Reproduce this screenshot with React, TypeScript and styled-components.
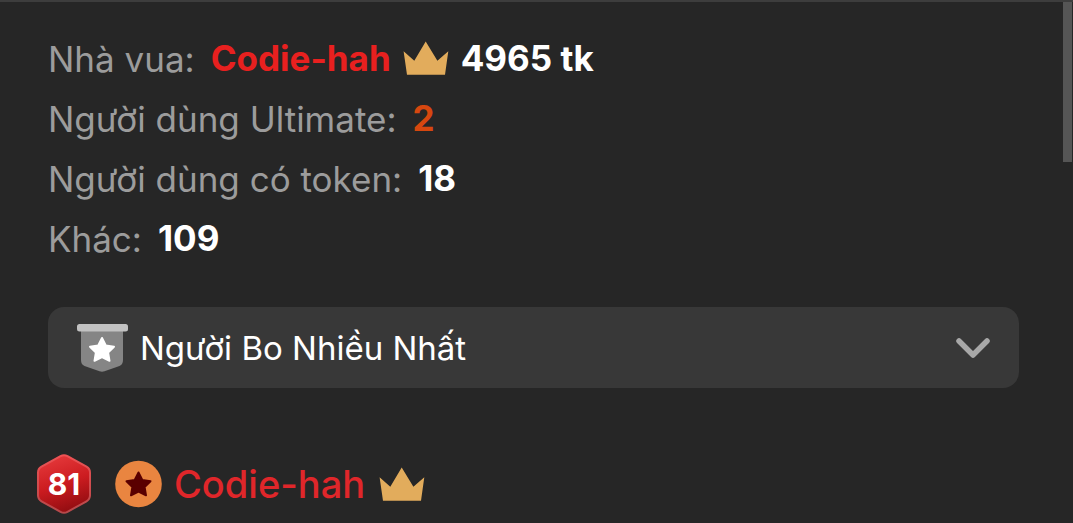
import React from 'react';
import styled, { createGlobalStyle } from 'styled-components';

const GlobalStyle = createGlobalStyle`
  * { box-sizing: border-box; }
  body {
    margin: 0;
    background: #262626;
    font-family: Inter, "Noto Sans", sans-serif;
    font-size: 35px;
    line-height: 60px;
    color: #fff;
    overflow: hidden;
  }
`;

const Page = styled.div`
  display: flex;
  align-items: flex-start;
  border-top: 2px solid #3d3d3d;
`;

const Content = styled.main`
  flex: 1;
  min-width: 0;
  padding: 27px 44px 0 48px;
`;

const ScrollThumb = styled.div`
  width: 9px;
  height: 160px;
  margin-right: 1px;
  background: #555;
`;

const Stats = styled.dl`
  margin: 0;
`;

const Stat = styled.div`
  display: flex;
  align-items: center;
  height: 60px;
`;

const Label = styled.dt`
  margin-right: 16px;
  color: #9c9c9c;
`;

const Value = styled.dd<{ $color?: string }>`
  display: flex;
  align-items: center;
  gap: 12px;
  margin: 0 0 2px;
  font-weight: 700;
  color: ${(p) => p.$color ?? '#fff'};
`;

const Amount = styled.span`
  color: #fff;
`;

const Picker = styled.div`
  display: flex;
  align-items: center;
  height: 81px;
  margin-top: 38px;
  padding: 0 28px;
  border-radius: 16px;
  background: #383838;
`;

const PickerSelect = styled.select`
  flex: 1;
  min-width: 0;
  height: 60px;
  margin: 0 12px;
  padding: 0;
  border: 0;
  outline: 0;
  appearance: none;
  background: transparent;
  color: #fff;
  font: inherit;
  font-size: 33px;
`;

const Ranking = styled.ol`
  list-style: none;
  margin: 66px 0 0 -12px;
  padding: 0;
`;

const RankRow = styled.li`
  display: flex;
  align-items: center;
  height: 60px;
`;

const Level = styled.span`
  display: grid;
  width: 56px;
  height: 60px;
  margin-right: 22px;
  place-items: center;
  font-size: 30px;
  font-weight: 700;

  > * { grid-area: 1 / 1; }
`;

const LevelNumber = styled.span`
  z-index: 1;
`;

const UserLink = styled.a`
  margin: 0 14px 0 12px;
  color: #e0262a;
  font-size: 38px;
  font-weight: 500;
  text-decoration: none;
`;

const Icon = styled.svg`
  display: block;
  flex: none;
`;

const STAR = 'M0-12 3.8-4.6 12-3.3 6.1 2.5 7.5 10.8 0 7-7.5 10.8-6.1 2.5-12-3.3-3.8-4.6Z';

const Crown = () => (
  <Icon width="46" height="34" viewBox="0 0 46 34" aria-hidden="true">
    <path d="M.6 10.2 11.3 19.8 22.7.4 34.4 19.8 45.3 10.2 42 33.7H4Z" fill="#e2ac5c" />
  </Icon>
);

const BannerIcon = () => (
  <Icon width="52" height="49" viewBox="0 0 52 49" aria-hidden="true">
    <path d="M5 5H47V37Q47 41.500 43.500 43L28.500 48.300Q26 49 23.500 48.300L8.500 43Q5 41.500 5 37Z" fill="#858585" />
    <rect x="1" y="1" width="51" height="7.500" rx="2.500" fill="#c2c2c2" />
    <path d={STAR} transform="translate(26 27)" fill="#fff" stroke="#fff" strokeWidth="2" strokeLinejoin="round" />
  </Icon>
);

const Chevron = () => (
  <Icon width="36" height="24" viewBox="0 0 36 24" aria-hidden="true">
    <path d="M4 5 18 19 32 5" fill="none" stroke="#a8a8a8" strokeWidth="5.500" strokeLinecap="round" strokeLinejoin="round" />
  </Icon>
);

const Hexagon = () => (
  <Icon width="56" height="60" viewBox="0 0 56 60" aria-hidden="true">
    <defs>
      <linearGradient id="level-fill" x1="0.3" y1="0" x2="0.6" y2="1">
        <stop offset="0" stopColor="#e5393b" />
        <stop offset="0.5" stopColor="#cc1c20" />
        <stop offset="1" stopColor="#8f0c10" />
      </linearGradient>
      <linearGradient id="level-edge" x1="0" y1="0" x2="0" y2="1">
        <stop offset="0" stopColor="#ee5254" />
        <stop offset="1" stopColor="#b5484a" />
      </linearGradient>
    </defs>
    <path
      d="M24.500 2.200Q28 .2 31.500 2.200L50.500 12.700Q54 14.700 54 18.700V41.300Q54 45.300 50.500 47.300L31.500 57.800Q28 59.800 24.500 57.800L5.500 47.300Q2 45.300 2 41.300V18.700Q2 14.700 5.500 12.700Z"
      fill="url(#level-fill)"
      stroke="url(#level-edge)"
      strokeWidth="2"
    />
  </Icon>
);

const Medal = () => (
  <Icon width="48" height="48" viewBox="0 0 48 48" aria-hidden="true">
    <circle cx="24.500" cy="24" r="23.300" fill="#e98540" />
    <path d={STAR} transform="translate(24.500 24.500)" fill="#5a0000" stroke="#5a0000" strokeWidth="2" strokeLinejoin="round" />
  </Icon>
);

export default function App() {
  return (
    <>
      <GlobalStyle />
      <Page>
        <Content>
          <Stats>
            <Stat>
              <Label>Nhà vua:</Label>
              <Value $color="#e8201f">
                Codie-hah
                <Crown />
                <Amount>4965 tk</Amount>
              </Value>
            </Stat>
            <Stat>
              <Label>Người dùng Ultimate:</Label>
              <Value $color="#d6470f">2</Value>
            </Stat>
            <Stat>
              <Label>Người dùng có token:</Label>
              <Value>18</Value>
            </Stat>
            <Stat>
              <Label>Khác:</Label>
              <Value>109</Value>
            </Stat>
          </Stats>
          <Picker>
            <label htmlFor="ranking"><BannerIcon /></label>
            <PickerSelect id="ranking" aria-label="Người Bo Nhiều Nhất">
              <option>Người Bo Nhiều Nhất</option>
            </PickerSelect>
            <Chevron />
          </Picker>
          <Ranking>
            <RankRow>
              <Level>
                <Hexagon />
                <LevelNumber>81</LevelNumber>
              </Level>
              <Medal />
              <UserLink href="#codie-hah">Codie-hah</UserLink>
              <Crown />
            </RankRow>
          </Ranking>
        </Content>
        <ScrollThumb />
      </Page>
    </>
  );
}
